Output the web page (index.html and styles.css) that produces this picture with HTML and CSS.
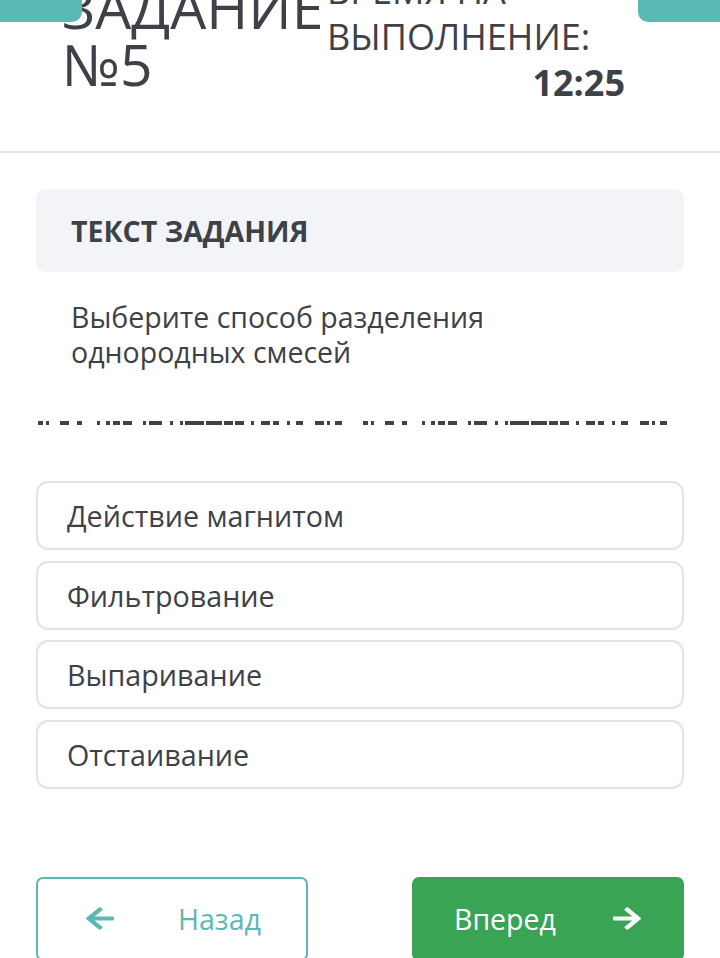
FILE: index.html
```html
<!DOCTYPE html>
<html lang="ru">
    <head>
        <meta charset="UTF-8" />
        <meta name="viewport" content="width=device-width, initial-scale=1.0" />
        <title>Задание №5</title>
        <link rel="stylesheet" href="styles.css">
    </head>
    <body>
        <div class="tab tab-left"></div>
        <div class="tab tab-right"></div>

        <header class="task-header">
            <h1 class="task-title">ЗАДАНИЕ<br>№5</h1>
            <div class="timer">
                <div class="timer-label">ВРЕМЯ НА<br>ВЫПОЛНЕНИЕ:</div>
                <div class="timer-value">12:25</div>
            </div>
        </header>

        <main class="content">
            <div class="task-box">
                <h2>ТЕКСТ ЗАДАНИЯ</h2>
            </div>
            <p class="question">Выберите способ разделения<br>однородных смесей</p>

            <svg class="blank" viewBox="0 0 644 5" preserveAspectRatio="none">
                <g fill="#3f4248">
                    <rect x="0" y="0" width="5" height="4" /><rect x="8" y="0" width="3" height="4" />
                    <rect x="22" y="0" width="9" height="4" /><rect x="39" y="0" width="5" height="4" />
                    <rect x="59" y="0" width="3" height="4" /><rect x="68" y="0" width="4" height="4" />
                    <rect x="75" y="0" width="7" height="4" /><rect x="85" y="0" width="9" height="4" />
                    <rect x="105" y="0" width="3" height="4" /><rect x="111" y="0" width="13" height="4" />
                    <rect x="132" y="0" width="3" height="4" /><rect x="142" y="0" width="3" height="4" />
                    <rect x="147" y="0" width="19" height="4" /><rect x="168" y="0" width="16" height="4" />
                    <rect x="186" y="0" width="9" height="4" /><rect x="197" y="0" width="9" height="4" />
                    <rect x="213" y="0" width="3" height="4" /><rect x="223" y="0" width="9" height="4" />
                    <rect x="235" y="0" width="6" height="4" /><rect x="249" y="0" width="3" height="4" />
                    <rect x="258" y="0" width="7" height="4" /><rect x="277" y="0" width="9" height="4" />
                    <rect x="289" y="0" width="3" height="4" /><rect x="297" y="0" width="7" height="4" />
                </g>
                <g fill="#3f4248" transform="translate(325 0)">
                    <rect x="0" y="0" width="5" height="4" /><rect x="8" y="0" width="3" height="4" />
                    <rect x="22" y="0" width="9" height="4" /><rect x="39" y="0" width="5" height="4" />
                    <rect x="59" y="0" width="3" height="4" /><rect x="68" y="0" width="4" height="4" />
                    <rect x="75" y="0" width="7" height="4" /><rect x="85" y="0" width="9" height="4" />
                    <rect x="105" y="0" width="3" height="4" /><rect x="111" y="0" width="13" height="4" />
                    <rect x="132" y="0" width="3" height="4" /><rect x="142" y="0" width="3" height="4" />
                    <rect x="147" y="0" width="19" height="4" /><rect x="168" y="0" width="16" height="4" />
                    <rect x="186" y="0" width="9" height="4" /><rect x="197" y="0" width="9" height="4" />
                    <rect x="213" y="0" width="3" height="4" /><rect x="223" y="0" width="9" height="4" />
                    <rect x="235" y="0" width="6" height="4" /><rect x="249" y="0" width="3" height="4" />
                    <rect x="258" y="0" width="7" height="4" /><rect x="277" y="0" width="9" height="4" />
                    <rect x="289" y="0" width="3" height="4" /><rect x="297" y="0" width="7" height="4" />
                </g>
            </svg>

            <div class="answers">
                <div class="answer">Действие магнитом</div>
                <div class="answer">Фильтрование</div>
                <div class="answer">Выпаривание</div>
                <div class="answer">Отстаивание</div>
            </div>

            <div class="nav">
                <button class="btn btn-back">
                    <svg class="arrow" viewBox="0 0 448 448" preserveAspectRatio="none">
                        <path d="M257.5 413.1l-22.2 22.2c-9.4 9.4-24.6 9.4-33.9 0L7 241c-9.4-9.4-9.4-24.6 0-33.9L201.4 12.7c9.4-9.4 24.6-9.4 33.9 0l22.2 22.2c9.5 9.5 9.3 25-.4 34.3L136.6 184H424c13.3 0 24 10.7 24 24v32c0 13.3-10.7 24-24 24H136.6l120.5 114.8c9.8 9.3 10 24.8.4 34.3z" />
                    </svg>
                    <span>Назад</span>
                </button>
                <button class="btn btn-next">
                    <span>Вперед</span>
                    <svg class="arrow" viewBox="0 0 448 448" preserveAspectRatio="none">
                        <path d="M190.5 34.9l22.2-22.2c9.4-9.4 24.6-9.4 33.9 0L441 207c9.4 9.4 9.4 24.6 0 33.9L246.6 435.3c-9.4 9.4-24.6 9.4-33.9 0l-22.2-22.2c-9.5-9.5-9.3-25 .4-34.3L311.4 264H24c-13.3 0-24-10.7-24-24v-32c0-13.3 10.7-24 24-24h287.4L190.9 69.2c-9.8-9.3-10-24.8-.4-34.3z" />
                    </svg>
                </button>
            </div>
        </main>
    </body>
</html>
```

FILE: styles.css
```css
* {
    margin: 0;
    padding: 0;
    box-sizing: border-box;
}

body {
    font-family: "Open Sans", "Noto Sans", sans-serif;
    background: #fff;
    color: #3e4148;
    width: 720px;
    height: 958px;
    overflow: hidden;
}

.tab {
    position: absolute;
    top: 0;
    width: 82px;
    height: 22px;
    background: #5bb9b3;
    z-index: 2;
}

.tab-left {
    left: 0;
    border-bottom-right-radius: 10px;
}

.tab-right {
    right: 0;
    border-bottom-left-radius: 10px;
}

.task-header {
    display: flex;
    height: 153px;
    padding-left: 62px;
    border-bottom: 2px solid #e4e4e4;
}

.task-title {
    width: 265px;
    margin-top: -21px;
    font-size: 57px;
    line-height: 57px;
    font-weight: 400;
}

.timer {
    width: 298px;
    margin-top: -32px;
}

.timer-label {
    font-size: 36px;
    line-height: 46px;
}

.timer-value {
    text-align: right;
    font-size: 36px;
    line-height: 46px;
    font-weight: 700;
}

.content {
    padding: 36px 36px 0;
}

.task-box {
    height: 83px;
    padding-left: 35px;
    display: flex;
    align-items: center;
    background: #f3f4f7;
    border-radius: 10px;
}

.task-box h2 {
    font-size: 28.5px;
    font-weight: 700;
}

.question {
    padding: 28px 0 0 35px;
    font-size: 28.5px;
    line-height: 35px;
}

.blank {
    display: block;
    width: 644px;
    height: 5px;
    margin: 51px 0 0 2px;
}

.answers {
    display: flex;
    flex-direction: column;
    gap: 10.5px;
    margin-top: 55px;
}

.answer {
    height: 69px;
    padding-left: 29px;
    display: flex;
    align-items: center;
    border: 2px solid #e3e3e3;
    border-radius: 12px;
    font-size: 28.7px;
}

.nav {
    display: flex;
    justify-content: space-between;
    margin-top: 88px;
}

.btn {
    width: 272px;
    height: 84px;
    display: flex;
    align-items: center;
    border-radius: 7px;
    font-family: inherit;
    font-size: 28.5px;
}

.btn .arrow {
    width: 28px;
    height: 23px;
    fill: currentColor;
}

.btn-back {
    background: #fff;
    border: 2px solid #5bb9b3;
    color: #5bb9b3;
    padding-left: 48px;
    gap: 64px;
}

.btn-next {
    background: #3aa455;
    border: none;
    color: #fff;
    padding-left: 42px;
    gap: 57px;
}
```
